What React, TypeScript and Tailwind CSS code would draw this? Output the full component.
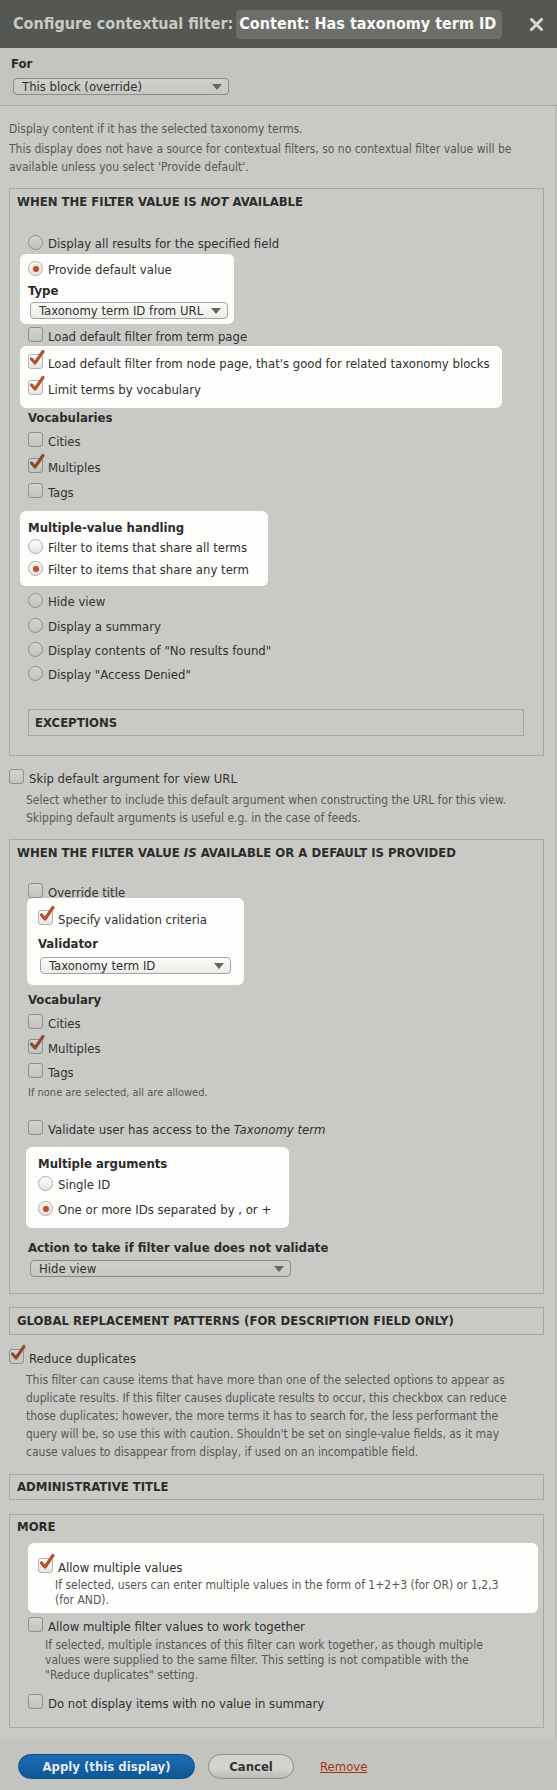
import React from 'react';

type OptProps = {
  type?: 'radio' | 'check';
  checked?: boolean;
  lit?: boolean;
  className?: string;
  children: React.ReactNode;
};

function CheckBox({ checked = false, lit = false }: { checked?: boolean; lit?: boolean }) {
  return (
    <span
      className={`relative mb-[5px] mr-[5px] h-[15px] w-[15px] shrink-0 rounded-[3px] border ${
        lit
          ? 'border-[#b2b2ae] bg-linear-to-b from-[#fbfbfa] to-[#e6e6e3]'
          : 'border-[#8e8f8b] bg-linear-to-b from-[#d3d4d0] to-[#c3c4c0]'
      }`}
    >
      {checked && (
        <svg
          className="absolute left-[-1px] top-[-6px] overflow-visible"
          width="17"
          height="20"
          viewBox="0 0 17 20"
        >
          <path
            d="M3.5 10 L7 14 L15 2.5"
            stroke={lit ? '#b3532d' : '#8f4a2e'}
            strokeWidth="3.2"
            fill="none"
            strokeLinecap="round"
            strokeLinejoin="round"
          />
        </svg>
      )}
    </span>
  );
}

function RadioBox({ checked = false, lit = false }: { checked?: boolean; lit?: boolean }) {
  return (
    <span
      className={`mb-[3px] mr-[5px] flex h-[15px] w-[15px] shrink-0 items-center justify-center rounded-full border ${
        lit
          ? 'border-[#adadaa] bg-linear-to-b from-[#fdfdfc] to-[#e4e4e2]'
          : 'border-[#8e8f8b] bg-linear-to-b from-[#d5d6d2] to-[#c1c2be]'
      }`}
    >
      {checked && <span className="h-[6px] w-[6px] rounded-full bg-[#b4532b] shadow-[0_0_0_2px_#efe3dc]" />}
    </span>
  );
}

function Opt({ type = 'check', checked = false, lit = false, className = '', children }: OptProps) {
  return (
    <div className={`flex h-[20px] items-center ${className}`}>
      {type === 'radio' ? <RadioBox checked={checked} lit={lit} /> : <CheckBox checked={checked} lit={lit} />}
      <span className="whitespace-nowrap text-[13px] text-[#30302e]">{children}</span>
    </div>
  );
}

function Lbl({ className = '', children }: { className?: string; children: React.ReactNode }) {
  return (
    <div className={`flex h-[20px] items-center whitespace-nowrap text-[13px] font-bold text-[#2c2c2a] ${className}`}>
      {children}
    </div>
  );
}

function Arrow() {
  return (
    <svg width="10" height="6" viewBox="0 0 10 6">
      <path d="M0 0 L10 0 L5 6 Z" fill="#676865" />
    </svg>
  );
}

function Sel({ lit = false, className = '', children }: { lit?: boolean; className?: string; children: React.ReactNode }) {
  return (
    <div
      className={`flex h-[17px] items-center justify-between rounded-[4px] border pl-[8px] pr-[6px] ${
        lit
          ? 'border-[#a3a3a0] bg-linear-to-b from-[#fbfbfa] to-[#ebebe8]'
          : 'border-[#8a8b87] bg-linear-to-b from-[#d0d1cd] to-[#c6c7c3]'
      } ${className}`}
    >
      <span className="whitespace-nowrap text-[13px] text-[#30302e]">{children}</span>
      <Arrow />
    </div>
  );
}

function Legend({ className = '', children }: { className?: string; children: React.ReactNode }) {
  return (
    <div
      className={`flex items-center whitespace-nowrap pl-[7px] text-[13px] font-bold uppercase text-[#2c2c2a] ${className}`}
    >
      {children}
    </div>
  );
}

function Lit({ className = '', children }: { className?: string; children: React.ReactNode }) {
  return <div className={`rounded-[6px] bg-[#fdfdfb] ${className}`}>{children}</div>;
}

function Desc({ className = '', lines, lh = 'leading-[18px]' }: { className?: string; lines: string[]; lh?: string }) {
  return (
    <div className={`whitespace-nowrap text-[12px] text-[#575755] ${lh} ${className}`}>
      {lines.map((l, i) => (
        <div key={i}>{l}</div>
      ))}
    </div>
  );
}

export default function App() {
  return (
    <div className="w-[557px] min-h-[1790px] bg-[#c9cac6] font-['DejaVu_Sans_Condensed','DejaVu_Sans',sans-serif] [font-stretch:condensed]">
      {/* Header */}
      <div className="flex h-[48px] items-center bg-[#555753] pl-[13px] pr-[14px]">
        <span className="whitespace-nowrap text-[16px] font-bold text-[#c8cac5]">Configure contextual filter:</span>
        <span className="ml-[3px] flex h-[29px] items-center whitespace-nowrap rounded-[4px] bg-[#6c6e6a] pl-[3px] pr-[6px] text-[16px] font-bold text-[#fbfbfb]">
          Content: Has taxonomy term ID
        </span>
        <svg className="ml-auto" width="13" height="13" viewBox="0 0 13 13">
          <path d="M1.5 1.5 L11.5 11.5 M11.5 1.5 L1.5 11.5" stroke="#d6d7d3" strokeWidth="3" strokeLinecap="round" />
        </svg>
      </div>

      {/* For */}
      <div className="box-border h-[58px] border-b border-[#a9aaa6] bg-[#c4c5c1] pl-[11px] pt-[7px]">
        <div className="flex h-[18px] items-center text-[13px] font-bold text-[#2c2c2a]">For</div>
        <Sel className="ml-[2px] mt-[5px] w-[216px]">This block (override)</Sel>
      </div>

      {/* Scrolling content */}
      <div className="w-[556px] border-r border-[#b3b4b0] pb-[11px] pt-[14px]">
        <Desc className="ml-[9px]" lines={['Display content if it has the selected taxonomy terms.']} />
        <Desc
          className="ml-[9px] mt-[2px]"
          lines={[
            'This display does not have a source for contextual filters, so no contextual filter value will be',
            "available unless you select 'Provide default'.",
          ]}
        />

        {/* Fieldset 1 */}
        <div className="ml-[9px] mt-[12px] w-[535px] border border-[#a8a9a5]">
          <Legend className="h-[26px]">
            <span>
              WHEN THE FILTER VALUE IS <i>NOT</i> AVAILABLE
            </span>
          </Legend>
          <div className="pb-[19px] pl-[10px]">
            <Opt type="radio" className="ml-[8px] mt-[19px]">
              Display all results for the specified field
            </Opt>
            <Lit className="w-[214px] pb-[5px] pl-[8px] pt-[6px]">
              <Opt type="radio" checked lit>
                Provide default value
              </Opt>
              <Lbl className="mt-[1px]">Type</Lbl>
              <Sel lit className="ml-[2px] mt-[1px] w-[198px]">
                Taxonomy term ID from URL
              </Sel>
            </Lit>
            <Opt className="ml-[8px] mt-[4px] !h-[18px]">Load default filter from term page</Opt>
            <Lit className="w-[482px] pb-[8px] pl-[8px] pt-[8px]">
              <Opt checked lit>
                Load default filter from node page, that's good for related taxonomy blocks
              </Opt>
              <Opt checked lit className="mt-[6px]">
                Limit terms by vocabulary
              </Opt>
            </Lit>
            <Lbl className="ml-[8px]">Vocabularies</Lbl>
            <Opt className="ml-[8px] mt-[4px]">Cities</Opt>
            <Opt checked className="ml-[8px] mt-[6px]">
              Multiples
            </Opt>
            <Opt className="ml-[8px] mt-[5px]">Tags</Opt>
            <Lit className="mt-[8px] w-[248px] pb-[6px] pl-[8px] pt-[7px]">
              <Lbl>Multiple-value handling</Lbl>
              <Opt type="radio" lit>
                Filter to items that share all terms
              </Opt>
              <Opt type="radio" lit checked className="mt-[2px]">
                Filter to items that share any term
              </Opt>
            </Lit>
            <Opt type="radio" className="ml-[8px] mt-[6px]">
              Hide view
            </Opt>
            <Opt type="radio" className="ml-[8px] mt-[5px]">
              Display a summary
            </Opt>
            <Opt type="radio" className="ml-[8px] mt-[4px]">
              Display contents of "No results found"
            </Opt>
            <Opt type="radio" className="ml-[8px] mt-[4px]">
              Display "Access Denied"
            </Opt>
            <div className="ml-[8px] mt-[24px] box-border flex h-[27px] w-[496px] items-center border border-[#a8a9a5] pl-[6px] text-[13px] font-bold text-[#2c2c2a]">
              EXCEPTIONS
            </div>
          </div>
        </div>

        {/* Skip default */}
        <Opt className="ml-[9px] mt-[13px]">Skip default argument for view URL</Opt>
        <Desc
          className="ml-[26px] mt-[2px]"
          lines={[
            'Select whether to include this default argument when constructing the URL for this view.',
            'Skipping default arguments is useful e.g. in the case of feeds.',
          ]}
        />

        {/* Fieldset 2 */}
        <div className="ml-[9px] mt-[12px] w-[535px] border border-[#a8a9a5]">
          <Legend className="h-[26px]">
            <span>
              WHEN THE FILTER VALUE <i>IS</i> AVAILABLE OR A DEFAULT IS PROVIDED
            </span>
          </Legend>
          <div className="pb-[16px] pl-[10px]">
            <Opt className="ml-[8px] mt-[17px]">Override title</Opt>
            <Lit className="ml-[7px] mt-[-5px] w-[217px] pb-[11px] pl-[11px] pt-[12px]">
              <Opt checked lit>
                Specify validation criteria
              </Opt>
              <Lbl className="mt-[4px]">Validator</Lbl>
              <Sel lit className="ml-[2px] mt-[3px] w-[191px]">
                Taxonomy term ID
              </Sel>
            </Lit>
            <Lbl className="ml-[8px] mt-[5px]">Vocabulary</Lbl>
            <Opt className="ml-[8px] mt-[4px]">Cities</Opt>
            <Opt checked className="ml-[8px] mt-[5px]">
              Multiples
            </Opt>
            <Opt className="ml-[8px] mt-[4px]">Tags</Opt>
            <div className="ml-[8px] mt-[3px] flex h-[14px] items-center whitespace-nowrap text-[11px] text-[#575755]">
              If none are selected, all are allowed.
            </div>
            <Opt className="ml-[8px] mt-[20px]">
              Validate user has access to the <i>Taxonomy term</i>
            </Opt>
            <Lit className="ml-[6px] mt-[7px] w-[263px] pb-[8px] pl-[12px] pt-[7px]">
              <Lbl>Multiple arguments</Lbl>
              <Opt type="radio" lit className="mt-[1px]">
                Single ID
              </Opt>
              <Opt type="radio" lit checked className="mt-[5px]">
                One or more IDs separated by , or +
              </Opt>
            </Lit>
            <Lbl className="ml-[8px] mt-[10px]">Action to take if filter value does not validate</Lbl>
            <Sel className="ml-[10px] mt-[2px] w-[261px]">Hide view</Sel>
          </div>
        </div>

        {/* Global replacement patterns */}
        <Legend className="ml-[9px] mt-[13px] box-border h-[28px] w-[535px] border border-[#a8a9a5]">
          GLOBAL REPLACEMENT PATTERNS (FOR DESCRIPTION FIELD ONLY)
        </Legend>

        <Opt checked className="ml-[9px] mt-[14px]">
          Reduce duplicates
        </Opt>
        <Desc
          className="ml-[26px] mt-[2px]"
          lines={[
            'This filter can cause items that have more than one of the selected options to appear as',
            'duplicate results. If this filter causes duplicate results to occur, this checkbox can reduce',
            'those duplicates; however, the more terms it has to search for, the less performant the',
            "query will be, so use this with caution. Shouldn't be set on single-value fields, as it may",
            'cause values to disappear from display, if used on an incompatible field.',
          ]}
        />

        <Legend className="ml-[9px] mt-[13px] box-border h-[26px] w-[535px] border border-[#a8a9a5]">
          ADMINISTRATIVE TITLE
        </Legend>

        {/* More */}
        <div className="ml-[9px] mt-[14px] w-[535px] border border-[#a8a9a5]">
          <Legend className="h-[24px]">MORE</Legend>
          <div className="pb-[13px] pl-[10px]">
            <Lit className="ml-[8px] mt-[4px] w-[510px] pb-[5px] pl-[10px] pt-[15px]">
              <Opt checked lit>
                Allow multiple values
              </Opt>
              <Desc
                className="ml-[17px]"
                lh="leading-[15px]"
                lines={[
                  'If selected, users can enter multiple values in the form of 1+2+3 (for OR) or 1,2,3',
                  '(for AND).',
                ]}
              />
            </Lit>
            <Opt className="ml-[8px] mt-[4px]">Allow multiple filter values to work together</Opt>
            <Desc
              className="ml-[25px] mt-[1px]"
              lh="leading-[15px]"
              lines={[
                'If selected, multiple instances of this filter can work together, as though multiple',
                'values were supplied to the same filter. This setting is not compatible with the',
                '"Reduce duplicates" setting.',
              ]}
            />
            <Opt className="ml-[8px] mt-[11px]">Do not display items with no value in summary</Opt>
          </div>
        </div>
      </div>

      {/* Footer */}
      <div className="flex h-[53px] items-start bg-[#c3c4c0] pl-[18px] pt-[15px]">
        <div className="box-border flex h-[25px] w-[177px] items-center justify-center rounded-full border border-[#0b4f8a] bg-linear-to-b from-[#1b6cb3] to-[#0f5796] text-[13px] font-bold text-[#e4ebf2]">
          Apply (this display)
        </div>
        <div className="ml-[13px] box-border flex h-[25px] w-[86px] items-center justify-center rounded-full border border-[#8d8e8a] bg-linear-to-b from-[#d3d4d0] from-60% to-[#b9bab6] text-[13px] font-bold text-[#333331]">
          Cancel
        </div>
        <div className="ml-[26px] flex h-[25px] items-center text-[13px] text-[#a8300f] underline">Remove</div>
      </div>
    </div>
  );
}
